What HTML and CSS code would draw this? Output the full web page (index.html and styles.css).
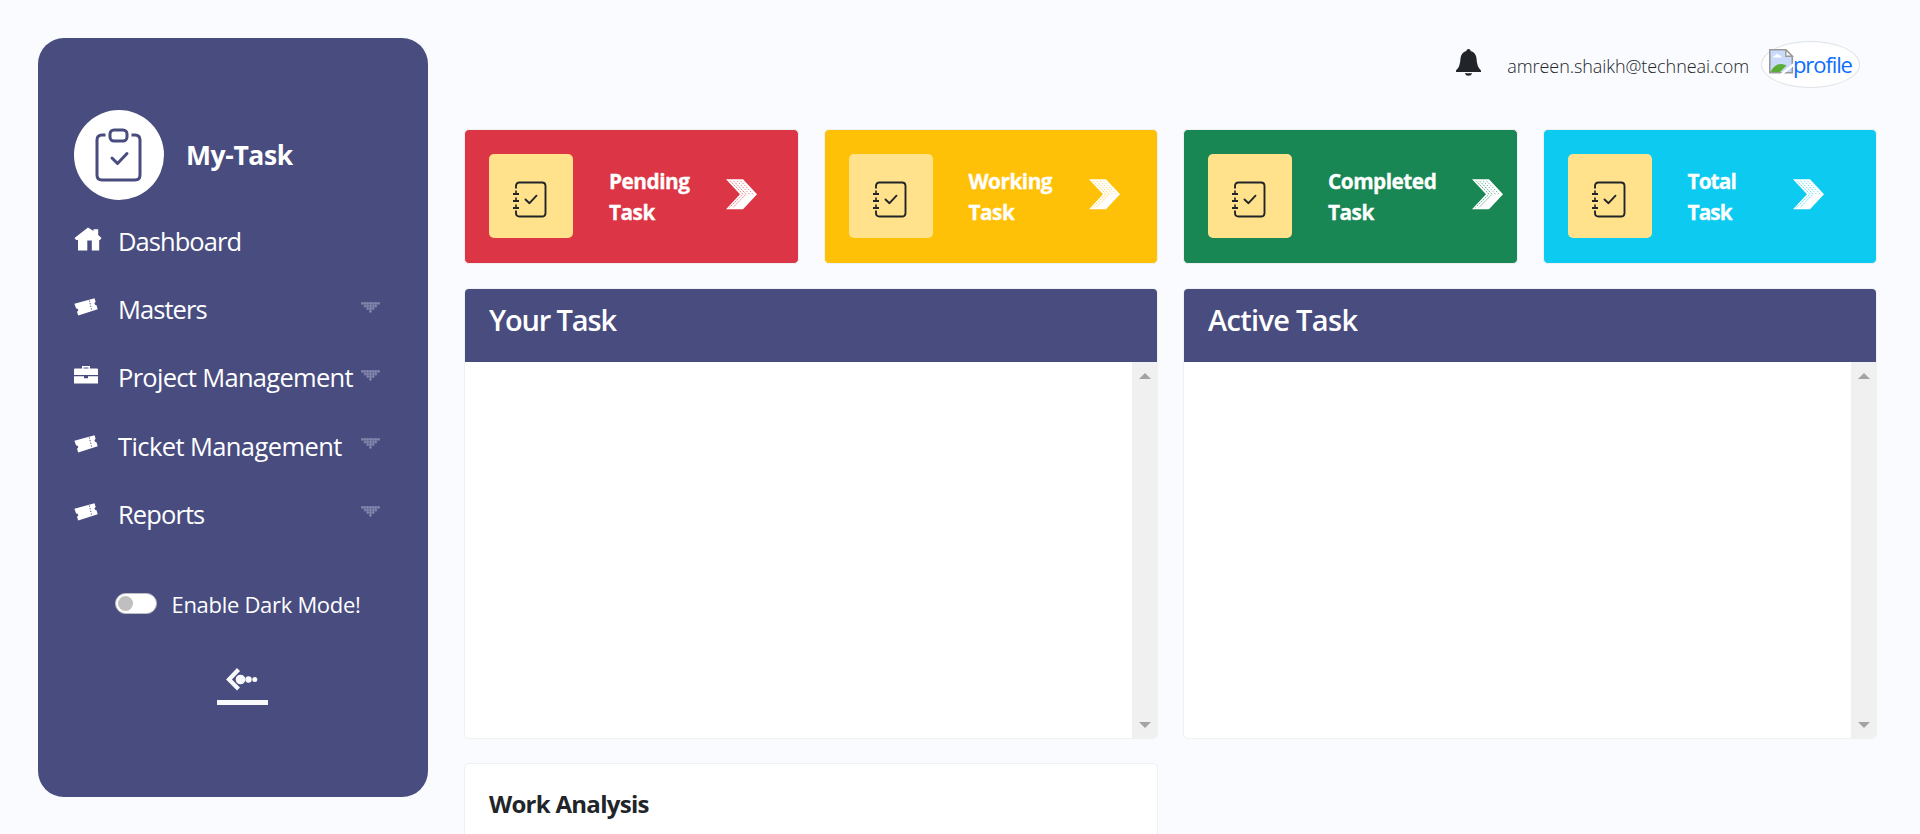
FILE: index.html
```html
<!DOCTYPE html>
<html lang="en">
<head>
<meta charset="utf-8">
<title>My-Task</title>
<link rel="stylesheet" href="styles.css">
</head>
<body>
<svg class="defs" width="0" height="0">
  <defs>
    <pattern id="dots" width="2.7" height="2.7" patternUnits="userSpaceOnUse"><circle cx="1.35" cy="1.35" r="1.25" fill="#888bb0"/></pattern>
    <symbol id="ticket" viewBox="0 0 24 18"><path d="M.4 5.800 20.500.3l1.200 3.800c-1.800.7-1.300 3.200.8 3.200l1.200 4L4.200 17.500 3 13.700c2-.8 1.400-3.500-.9-3.200z"/><path d="M15.300 2.500l2.600 10.400" fill="none" stroke="#484c7f" stroke-width="1" stroke-dasharray="1.200 1.500"/></symbol>
    <symbol id="caret" viewBox="0 0 19 11"><path d="M0 0h18.900v2.700H0zM2.700 2.700h13.500v2.700H2.700zM5.400 5.400h8.100v2.700H5.400zM8.100 8.100h2.700v2.700H8.100z" fill="url(#dots)"/></symbol>
    <symbol id="journal" viewBox="0 0 35 37"><g fill="none" stroke="#212529" stroke-width="1.900"><path d="M4 7.500V5q0-3.500 3.500-3.500H30q3.500 0 3.500 3.500v27q0 3.500-3.500 3.500H7.500Q4 35.500 4 32v-2.500"/><path d="M13.500 18.500l4 3.700 7-7.500" stroke-linecap="round" stroke-linejoin="round"/></g><path d="M1 12h2.200V9.500h1.600V12H7v2H1zM1 19h2.200v-2.500h1.600V19H7v2H1zM1 26h2.200v-2.500h1.600V26H7v2H1z" fill="#212529"/></symbol>
    <symbol id="chevrons" viewBox="0 0 31 31"><path d="M0 .3h17L31 15.200 17 30.300H0L14 15.200z" fill="#fff"/><g fill="none" stroke="currentColor" stroke-width=".6" stroke-dasharray="2 .8"><path d="M4 1.800l13 13.400L3.500 28.500M7.500 1.800l12.500 13.400L7 28.500"/><path d="M11 1.800l12.500 13.400M14.500 1.800L27 15.200" stroke-dasharray="1.500 1.300"/></g></symbol>
  </defs>
</svg>
<div class="app">
  <aside class="sidebar">
    <div class="brand">
      <span class="brand-icon"><svg width="47" height="54" viewBox="0 0 47 54"><g fill="none" stroke="#484c7f" stroke-width="3"><path d="M10.500 7H7Q2 7 2 12v35q0 5 5 5h33q5 0 5-5V12q0-5-5-5h-3.500"/><rect x="15" y="2" width="17" height="11" rx="4"/><path d="M17 30l5.500 5.500L32 25.500" stroke-linecap="round" stroke-linejoin="round"/></g></svg></span>
      <span class="brand-name">My-Task</span>
    </div>
    <nav class="nav">
      <a class="nav-item"><span class="nav-icon"><svg class="home" width="28" height="24" viewBox="0 0 28 24"><path d="M14 .5L19.500 4V2.300h4.700V8l3.300 3-1.500 2h-.8v10.400h-7.400V13.500h-4.500v9.900H4V13H2.200L.5 11z"/></svg></span><span class="nav-text t-dash">Dashboard</span></a>
      <a class="nav-item"><span class="nav-icon"><svg width="24" height="18"><use href="#ticket"/></svg></span><span class="nav-text t-mast">Masters</span><svg class="caret" width="19" height="11"><use href="#caret"/></svg></a>
      <a class="nav-item"><span class="nav-icon"><svg width="24" height="18" viewBox="0 0 24 18"><path d="M0 3.500Q0 2.500 1 2.500h7V0h8v2.500h7q1 0 1 1V9H0zM9.500 2.500h5V1.400h-5zM0 10.200h10v2h4v-2h10v7.300H0z" fill-rule="evenodd"/></svg></span><span class="nav-text t-proj">Project Management</span><svg class="caret" width="19" height="11"><use href="#caret"/></svg></a>
      <a class="nav-item"><span class="nav-icon"><svg width="24" height="18"><use href="#ticket"/></svg></span><span class="nav-text t-tick">Ticket Management</span><svg class="caret" width="19" height="11"><use href="#caret"/></svg></a>
      <a class="nav-item"><span class="nav-icon"><svg width="24" height="18"><use href="#ticket"/></svg></span><span class="nav-text t-rep">Reports</span><svg class="caret" width="19" height="11"><use href="#caret"/></svg></a>
    </nav>
    <div class="dark-mode"><span class="switch"><span class="knob"></span></span><span class="dark-label">Enable Dark Mode!</span></div>
    <div class="collapse"><svg width="32" height="23" viewBox="0 0 32 23"><path d="M12.500 1.500L3 11.500l9.500 9.500" fill="none" stroke="#f8f9fa" stroke-width="4.200"/><g fill="#f8f9fa"><circle cx="14.500" cy="11.500" r="4.800"/><circle cx="22.500" cy="11.500" r="3.200"/><circle cx="28.800" cy="11.500" r="2.500"/></g></svg></div>
  </aside>
  <main class="main">
    <header class="topbar">
      <svg class="bell" width="25" height="27" viewBox="0 0 25 27"><path d="M12.500 0q2 0 2.200 1.900Q20 3.500 20.500 9.500q.3 8.500 4.500 12V23H0v-1.500q4.200-3.500 4.500-12Q5 3.500 10.300 1.900 10.500 0 12.500 0zM8.800 24.200h7.400q-.8 2.500-3.700 2.500t-3.700-2.500z" fill="#212529"/></svg>
      <span class="email">amreen.shaikh@techneai.com</span>
      <a class="avatar"><svg width="25" height="25" viewBox="0 0 25 25"><path d="M.8.8h16l6.500 6.500v16.500H.8z" fill="#c9dafb" stroke="#999" stroke-width="1.600"/><path d="M4 8.500q.5-2 2.200-2Q7.500 3.500 9.500 6q3 .3 3 2.500z" fill="#fff"/><path d="M1.600 23Q5 15.500 12 15q3 0 5.500 1.500L11 23z" fill="#5aad35"/><path d="M16.800.8v6.500h6.500z" fill="#fff" stroke="#999" stroke-width="1.400"/><path d="M25 13.500L11 25h3.500L25 17z" fill="#fff"/></svg><span class="avatar-alt">profile</span></a>
    </header>
    <section class="grid">
      <div class="card stat red"><span class="stat-icon"><svg width="35" height="37"><use href="#journal"/></svg></span><span class="stat-text">Pending<br>Task</span><svg class="chev" width="31" height="31"><use href="#chevrons"/></svg></div>
      <div class="card stat yellow"><span class="stat-icon"><svg width="35" height="37"><use href="#journal"/></svg></span><span class="stat-text">Working<br>Task</span><svg class="chev" width="31" height="31"><use href="#chevrons"/></svg></div>
      <div class="card stat green"><span class="stat-icon"><svg width="35" height="37"><use href="#journal"/></svg></span><span class="stat-text">Completed<br>Task</span><svg class="chev" width="31" height="31"><use href="#chevrons"/></svg></div>
      <div class="card stat cyan"><span class="stat-icon"><svg width="35" height="37"><use href="#journal"/></svg></span><span class="stat-text">Total<br>Task</span><svg class="chev" width="31" height="31"><use href="#chevrons"/></svg></div>
      <div class="card panel"><h2 class="panel-head t-your">Your Task</h2><div class="panel-body"><div class="scroll"><i class="up"></i><i class="down"></i></div></div></div>
      <div class="card panel"><h2 class="panel-head t-active">Active Task</h2><div class="panel-body"><div class="scroll"><i class="up"></i><i class="down"></i></div></div></div>
      <div class="card analysis"><h3 class="analysis-title">Work Analysis</h3></div>
    </section>
  </main>
</div>
</body>
</html>
```
FILE: styles.css
```css
* { box-sizing: border-box; }
body { margin: 0; height: 834px; overflow: hidden; background: #fafbfe; font-family: "Open Sans", "Noto Sans", sans-serif; color: #212529; }
.defs { position: absolute; }
.app { display: flex; height: 834px; padding-left: 38px; gap: 36px; overflow: hidden; }
.sidebar { width: 390px; height: 759px; margin-top: 38px; flex: none; padding: 72px 36px 0; border-radius: 26px; background: #484c7f; color: #fff; }
.brand { display: flex; align-items: center; height: 90px; gap: 22px; }
.brand-icon { display: flex; align-items: center; justify-content: center; width: 90px; height: 90px; border-radius: 50%; background: #fff; }
.brand-icon svg { margin-right: 1px; }
.brand-name { font-size: 26.5px; font-weight: 700; line-height: 36px; letter-spacing: -0.4px; }
.nav { display: flex; flex-direction: column; padding-top: 7px; }
.nav-item { display: flex; align-items: center; height: 68.200px; white-space: nowrap; }
.nav-icon { display: flex; width: 44px; padding-bottom: 4px; fill: #fff; }
.nav-text { font-size: 25.500px; line-height: 34px; letter-spacing: -0.700px; }
.t-dash { letter-spacing: -0.950px; }
.t-mast { letter-spacing: -0.950px; }
.t-tick { letter-spacing: -0.600px; }
.t-rep { letter-spacing: -0.900px; }
.caret { margin: 0 12px 4px auto; flex: none; }
.dark-mode { display: flex; align-items: center; height: 34px; margin: 39px 0 0 41px; }
.switch { display: flex; align-items: center; width: 42px; height: 21px; padding-left: 2px; border: 1px solid #bfbfbf; border-radius: 11px; background: #fff; }
.knob { width: 15px; height: 15px; border-radius: 50%; background: #bfbfbf; }
.dark-label { margin-left: 14.500px; font-size: 22px; line-height: 34px; letter-spacing: -0.300px; white-space: nowrap; }
.collapse { display: flex; justify-content: center; width: 51px; height: 40px; margin: 44px 0 0 143px; padding: 3px 1px 0 0; border-bottom: 5px solid #f8f9fa; }
.main { width: 1414px; flex: none; }
.topbar { display: flex; height: 129px; padding: 41px 18px 0 0; justify-content: flex-end; }
.bell { margin: 8px 26px 0 0; }
.email { margin-top: 7px; font-size: 18px; font-weight: 300; line-height: 36px; letter-spacing: -0.070px; white-space: nowrap; }
.avatar { display: flex; width: 99px; height: 47px; margin-left: 12px; padding: 7px; border: 1px solid #dee2e6; border-radius: 50%; background: #fff; color: #0d6efd; }
.avatar svg { flex: none; }
.avatar-alt { margin-left: -1px; font-size: 22px; line-height: 31px; letter-spacing: -1.100px; }
.grid { display: grid; grid-template-columns: repeat(4, 334.500px); grid-template-rows: 135px 451px 80px; column-gap: 25px; row-gap: 24px; }
.card { min-width: 0; border: 1px solid #eff0f2; border-radius: 5px; background: #fff; overflow: hidden; }
.stat { display: flex; align-items: flex-start; padding: 24px 0 24px 24px; }
.stat-icon { display: flex; flex: none; align-items: flex-start; width: 84px; height: 84px; padding: 26.500px 0 0 23px; border-radius: 5px; background: #ffe28b; }
.stat-text { flex: none; min-width: 68px; margin: 12px 0 0 36px; font-size: 20.800px; font-weight: 700; line-height: 31px; letter-spacing: -0.5px; color: #fff; white-space: nowrap; -webkit-text-stroke: 0.3px #fff; }
.chev { margin: 25px 0 0 37px; flex: none; }
.red { background: #dc3545; color: #dc3545; }
.yellow { background: #ffc107; color: #ffc107; }
.green { background: #198754; color: #198754; }
.green .chev { margin-left: 36px; }
.cyan { background: #0dcaf0; color: #0dcaf0; }
.cyan .stat-text { letter-spacing: -0.900px; }
.panel { grid-column: span 2; }
.panel-head { height: 73px; margin: 0; padding: 12px 24px; background: #484c7f; color: #fff; font-size: 29px; font-weight: 600; line-height: 38px; }
.t-your { letter-spacing: -1.150px; }
.t-active { letter-spacing: -0.680px; }
.panel-body { display: flex; justify-content: flex-end; height: 376px; }
.scroll { display: flex; flex-direction: column; align-items: center; justify-content: space-between; width: 25px; height: 376px; padding: 11px 0 10px; background: #f0f0f0; }
.up, .down { width: 0; height: 0; border: 6px solid transparent; }
.up { border-top: 0; border-bottom: 6px solid #a3a3a3; }
.down { border-bottom: 0; border-top: 6px solid #a3a3a3; }
.analysis { grid-column: span 2; padding: 24px; }
.analysis-title { margin: 0; font-size: 24px; font-weight: 700; line-height: 32px; letter-spacing: -0.720px; }
```
